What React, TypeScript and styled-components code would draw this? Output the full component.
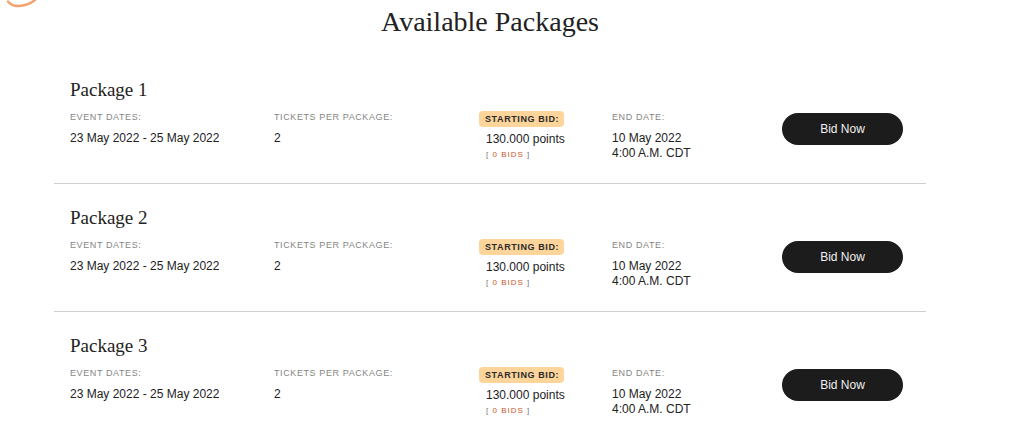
import styled, { createGlobalStyle } from "styled-components";

interface IPackage {
  id: number
  name: string
  eventDates: string
  tickets: number
  startingBid: string
  bids: number
  endDate: string
  endTime: string
}

const packages: IPackage[] = [1, 2, 3].map((n) => ({
  id: n,
  name: `Package ${n}`,
  eventDates: "23 May 2022 - 25 May 2022",
  tickets: 2,
  startingBid: "130.000 points",
  bids: 0,
  endDate: "10 May 2022",
  endTime: "4:00 A.M. CDT",
}))

const GlobalStyle = createGlobalStyle`
  body {
    margin: 0;
    background: #ffffff;
    font-family: "Liberation Sans", Arial, sans-serif;
    color: #222;
    overflow: hidden;
  }
`

const Page = styled.div`
  position: relative;
  width: 1024px;
  height: 433px;
  overflow: hidden;
`

const Scribble = styled.svg`
  position: absolute;
  left: 0;
  top: 0;
`

const Container = styled.main`
  width: 872px;
  margin-left: 54px;
  padding-top: 5px;
`

const Title = styled.h1`
  margin: 0 0 17px;
  font-family: "Liberation Serif", "Times New Roman", serif;
  font-weight: 400;
  font-size: 28px;
  line-height: 34px;
  text-align: center;
  color: #222;
`

const Row = styled.section`
  box-sizing: border-box;
  height: 128px;
  padding: 22px 16px 0;
  border-bottom: 1px solid #cfcfcf;

  &:last-child {
    border-bottom: none;
  }
`

const PackageName = styled.h2`
  margin: 0 0 9px;
  font-family: "Liberation Serif", "Times New Roman", serif;
  font-weight: 400;
  font-size: 19px;
  line-height: 24px;
  color: #222;
`

const Grid = styled.div`
  display: grid;
  grid-template-columns: 204px 205px 133px 170px 121px;
  align-items: start;
`

const Column = styled.div`
  display: flex;
  flex-direction: column;
`

const Label = styled.span`
  font-size: 9px;
  line-height: 12px;
  letter-spacing: 0.6px;
  text-transform: uppercase;
  color: #858585;
`

const Badge = styled.span`
  align-self: flex-start;
  padding: 2px 5px 2px 6px;
  border-radius: 4px;
  background: #fdd49a;
  font-size: 9px;
  line-height: 12px;
  font-weight: 700;
  letter-spacing: 0.6px;
  color: #2a2a2a;
`

const Value = styled.span<{ $indent?: boolean }>`
  margin-top: ${({ $indent }) => ($indent ? "5px" : "8px")};
  padding-left: ${({ $indent }) => ($indent ? "7px" : "0")};
  font-size: 12px;
  line-height: 15px;
  color: #222;
`

const Bids = styled.span`
  margin-top: 2px;
  padding-left: 7px;
  font-size: 8px;
  line-height: 12px;
  letter-spacing: 1px;
  color: #777;

  b {
    font-weight: 400;
    color: #c8582c;
  }
`

const BidButton = styled.button`
  margin-top: 2px;
  width: 121px;
  height: 32px;
  border: none;
  border-radius: 16px;
  background: #1c1c1c;
  color: #f0f0f0;
  font-family: "Liberation Sans", Arial, sans-serif;
  font-size: 12px;
  cursor: pointer;
`

const PackageRow = ({ name, eventDates, tickets, startingBid, bids, endDate, endTime }: IPackage) => (
  <Row>
    <PackageName>{name}</PackageName>
    <Grid>
      <Column>
        <Label>Event Dates:</Label>
        <Value>{eventDates}</Value>
      </Column>
      <Column>
        <Label>Tickets per package:</Label>
        <Value>{tickets}</Value>
      </Column>
      <Column>
        <Badge>STARTING BID:</Badge>
        <Value $indent>{startingBid}</Value>
        <Bids>
          [ <b>{bids} BIDS</b> ]
        </Bids>
      </Column>
      <Column>
        <Label>End Date:</Label>
        <Value>
          {endDate}
          <br />
          {endTime}
        </Value>
      </Column>
      <BidButton>Bid Now</BidButton>
    </Grid>
  </Row>
)

const App = () => (
  <Page>
    <GlobalStyle />
    <Scribble width="60" height="20" viewBox="0 0 60 20">
      <path
        d="M8 1.5 C 11 5.5, 17 7, 25 5 C 30 3.8, 33 2, 36 -1"
        fill="none"
        stroke="#f5a26e"
        strokeWidth="2.4"
        strokeLinecap="round"
      />
    </Scribble>
    <Container>
      <Title>Available Packages</Title>
      {packages.map((p) => (
        <PackageRow key={p.id} {...p} />
      ))}
    </Container>
  </Page>
)

export default App
